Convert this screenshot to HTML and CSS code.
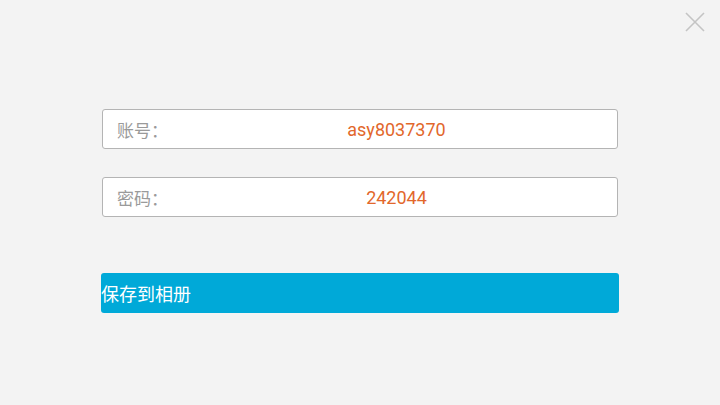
FILE: index.html
```html
<!DOCTYPE html>
<html lang="zh">
<head>
<meta charset="utf-8">
<link rel="stylesheet" href="styles.css">
</head>
<body>
<div class="screen">
  <button class="close" aria-label="关闭">
    <svg width="20" height="20" viewBox="0 0 20 20"><path d="M1 1L19 19M19 1L1 19" stroke="#c4c4c4" stroke-width="1.6" fill="none"/></svg>
  </button>
  <div class="form">
    <div class="field">
      <span class="label">账号：</span>
      <span class="value">asy8037370</span>
    </div>
    <div class="field">
      <span class="label">密码：</span>
      <span class="value">242044</span>
    </div>
    <button class="save">保存到相册</button>
  </div>
</div>
</body>
</html>
```
FILE: styles.css
```css
html, body {
  margin: 0;
  padding: 0;
  background: #f3f3f3;
}
.screen {
  position: relative;
  width: 720px;
  height: 405px;
  font-family: "Noto Sans CJK SC", "Roboto", sans-serif;
}
.close {
  position: absolute;
  top: 12px;
  right: 15px;
  padding: 0;
  border: 0;
  background: none;
  width: 20px;
  height: 20px;
}
.close svg { display: block; }
.form {
  display: flex;
  flex-direction: column;
  padding: 109px 0 0 101px;
  width: 518px;
}
.field {
  display: flex;
  align-items: center;
  height: 38px;
  margin: 0 1px 28px;
  background: #fff;
  border: 1px solid #b4b4b4;
  border-radius: 3px;
}
.label {
  width: 59px;
  padding-left: 14px;
  font-size: 17px;
  color: #9a9a9a;
}
.value {
  flex: 1;
  text-align: center;
  font-family: "Roboto", sans-serif;
  font-size: 18px;
  color: #e2672b;
}
.save {
  margin-top: 28px;
  height: 40px;
  padding: 0;
  border: 0;
  border-radius: 3px;
  background: #00a9d8;
  color: #fff;
  font-family: "Noto Sans CJK SC", sans-serif;
  font-size: 18px;
  text-align: left;
}
```
